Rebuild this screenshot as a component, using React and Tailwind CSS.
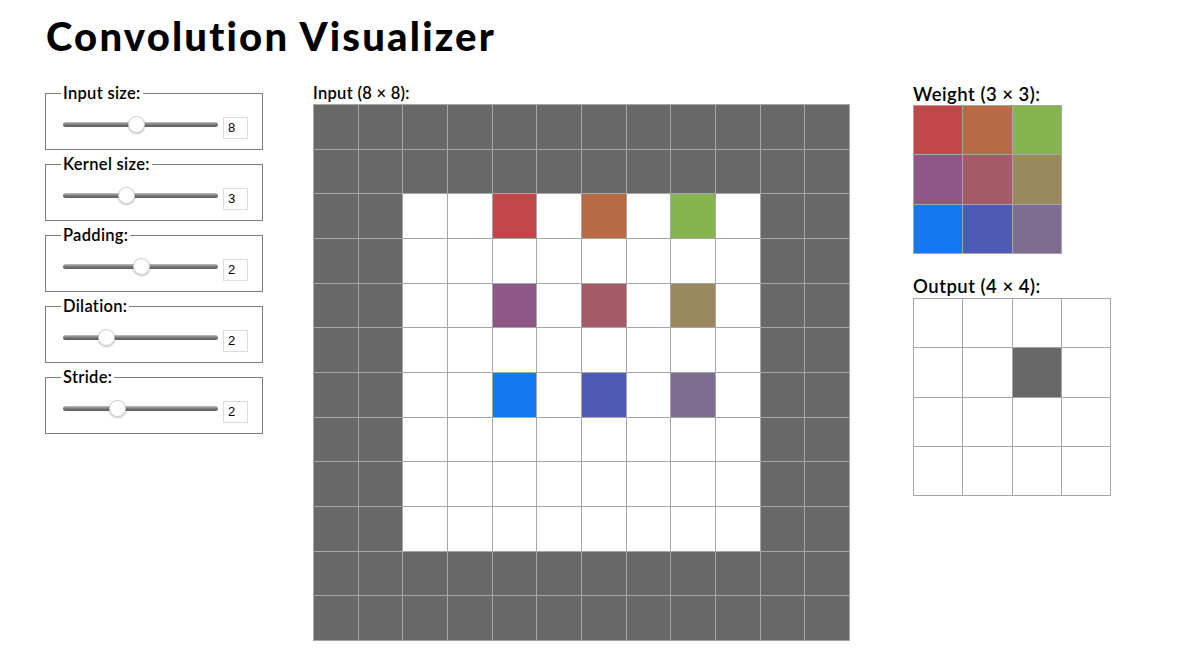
import React from "react";

const W = {
  r: "bg-[#c2464a]",
  o: "bg-[#b86a45]",
  g: "bg-[#86b550]",
  p: "bg-[#8f5787]",
  m: "bg-[#a55a67]",
  ol: "bg-[#9a885e]",
  b: "bg-[#1479ef]",
  i: "bg-[#4f5ab5]",
  l: "bg-[#7e6d90]",
};
const weights = [
  [W.r, W.o, W.g],
  [W.p, W.m, W.ol],
  [W.b, W.i, W.l],
];

const controls = [
  { label: "Input size:", value: "8", center: 136.7 },
  { label: "Kernel size:", value: "3", center: 126.7 },
  { label: "Padding:", value: "2", center: 141 },
  { label: "Dilation:", value: "2", center: 106 },
  { label: "Stride:", value: "2", center: 117 },
];

const font = "font-['Lato','Open_Sans',sans-serif]";

function Control({ label, value, center }) {
  return (
    <fieldset className="border border-[#7c7c7c] h-[67px] pl-[15px] pr-[10px] m-0 p-0">
      <legend className="px-[2px] text-[16.5px] leading-[20px] font-semibold tracking-[0.3px] text-black">{label}</legend>
      <div className="flex items-center pl-[2px] pt-[10px]">
        <div className="relative w-[155px] h-[22px] flex items-center mb-[7px]">
          <div className="w-full h-[5px] rounded-full bg-gradient-to-b from-[#c4c4c4] via-[#7a7a7a] to-[#5c5c5c]" />
          <div
            className="absolute top-[3px] w-[17px] h-[17px] rounded-full bg-white border border-[#d0d0d0] shadow-[0_1px_2px_rgba(0,0,0,0.25)]"
            style={{ left: center - 63 - 8.5 }}
          />
        </div>
        <div className="ml-[5px] w-[25px] h-[22px] border border-[#dcdcdc] flex items-center pl-[4px] text-[13px] font-['Liberation_Sans',sans-serif] text-black">
          {value}
        </div>
      </div>
    </fieldset>
  );
}

function InputGrid() {
  const cells = [];
  for (let r = 0; r < 12; r++) {
    for (let c = 0; c < 12; c++) {
      const inside = r >= 2 && r <= 9 && c >= 2 && c <= 9;
      let cls = inside ? "bg-white" : "bg-[#686868]";
      if ([2, 4, 6].includes(r) && [4, 6, 8].includes(c)) {
        cls = weights[(r - 2) / 2][(c - 4) / 2];
      }
      cells.push(<div key={r + "-" + c} className={cls} />);
    }
  }
  return (
    <div className="w-[537px] h-[537px] grid grid-cols-12 grid-rows-12 gap-px p-px bg-[#a6a6a6]">
      {cells}
    </div>
  );
}

function WeightGrid() {
  return (
    <div className="w-[149px] h-[149px] grid grid-cols-3 grid-rows-3 gap-px p-px bg-[#a6a6a6]">
      {weights.flat().map((c, i) => (
        <div key={i} className={c} />
      ))}
    </div>
  );
}

function OutputGrid() {
  const cells = [];
  for (let i = 0; i < 16; i++) {
    cells.push(<div key={i} className={i === 6 ? "bg-[#686868]" : "bg-white"} />);
  }
  return (
    <div className="w-[198px] h-[198px] grid grid-cols-4 grid-rows-4 gap-px p-px bg-[#a6a6a6]">
      {cells}
    </div>
  );
}

export default function App() {
  return (
    <div className={"w-[1200px] h-[667px] bg-white text-black overflow-hidden " + font}>
      <h1 className="pl-[46px] pt-[12px] text-[40px] leading-[48px] font-black tracking-[2.2px]">
        Convolution Visualizer
      </h1>
      <div className="flex mt-[23px] pl-[45px]">
        <div className="w-[218px] flex flex-col gap-[4px]">
          {controls.map((c) => (
            <Control key={c.label} {...c} />
          ))}
        </div>
        <div className="ml-[50px]">
          <div className="text-[16.5px] leading-[20px] mb-px font-semibold tracking-[0.3px]">Input (8 × 8):</div>
          <InputGrid />
        </div>
        <div className="ml-[63px]">
          <div className="text-[18.5px] leading-[22px] font-semibold tracking-[0.5px]">Weight (3 × 3):</div>
          <WeightGrid />
          <div className="text-[18.5px] leading-[22px] mt-[21px] mb-[1px] font-semibold tracking-[0.5px]">Output (4 × 4):</div>
          <OutputGrid />
        </div>
      </div>
    </div>
  );
}
